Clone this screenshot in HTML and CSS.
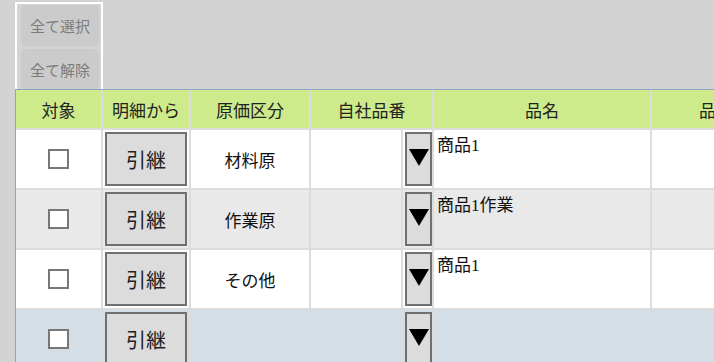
FILE: index.html
```html
<!DOCTYPE html>
<html lang="ja">
<head>
    <meta charset="UTF-8">
    <meta name="viewport" content="width=device-width, initial-scale=1.0">
    <title>原価明細</title>
    <link rel="stylesheet" href="styles.css">
</head>
<body>

    <div class="page">
        <!-- 一括選択ボタン -->
        <div class="select-panel">
            <button type="button" class="panel-btn">全て選択</button>
            <button type="button" class="panel-btn">全て解除</button>
        </div>

        <table class="detail-table">
            <colgroup>
                <col class="col-target">
                <col class="col-copy">
                <col class="col-kind">
                <col class="col-code">
                <col class="col-pick">
                <col class="col-name">
                <col class="col-more">
            </colgroup>
            <thead>
                <tr>
                    <th>対象</th>
                    <th>明細から</th>
                    <th>原価区分</th>
                    <th colspan="2">自社品番</th>
                    <th>品名</th>
                    <th>品番</th>
                </tr>
            </thead>
            <tbody>
                <tr>
                    <td class="center"><input type="checkbox" class="check"></td>
                    <td class="top"><button type="button" class="copy-btn">引継</button></td>
                    <td class="center">材料原</td>
                    <td></td>
                    <td class="top"><button type="button" class="pick-btn"><svg width="20" height="17" viewBox="0 0 20 17"><path d="M0 0H20L10 17Z" fill="#000"/></svg></button></td>
                    <td class="name">商品1</td>
                    <td></td>
                </tr>
                <tr class="alt">
                    <td class="center"><input type="checkbox" class="check"></td>
                    <td class="top"><button type="button" class="copy-btn">引継</button></td>
                    <td class="center">作業原</td>
                    <td></td>
                    <td class="top"><button type="button" class="pick-btn"><svg width="20" height="17" viewBox="0 0 20 17"><path d="M0 0H20L10 17Z" fill="#000"/></svg></button></td>
                    <td class="name">商品1作業</td>
                    <td></td>
                </tr>
                <tr>
                    <td class="center"><input type="checkbox" class="check"></td>
                    <td class="top"><button type="button" class="copy-btn">引継</button></td>
                    <td class="center">その他</td>
                    <td></td>
                    <td class="top"><button type="button" class="pick-btn"><svg width="20" height="17" viewBox="0 0 20 17"><path d="M0 0H20L10 17Z" fill="#000"/></svg></button></td>
                    <td class="name">商品1</td>
                    <td></td>
                </tr>
                <tr class="active">
                    <td class="center"><input type="checkbox" class="check"></td>
                    <td class="top"><button type="button" class="copy-btn">引継</button></td>
                    <td class="center"></td>
                    <td></td>
                    <td class="top"><button type="button" class="pick-btn"><svg width="20" height="17" viewBox="0 0 20 17"><path d="M0 0H20L10 17Z" fill="#000"/></svg></button></td>
                    <td class="name"></td>
                    <td></td>
                </tr>
            </tbody>
        </table>
    </div>

</body>
</html>
```

FILE: styles.css
```css
body {
    margin: 0;
    background-color: #d3d3d3;
    font-family: "Noto Sans CJK JP", sans-serif;
    overflow: hidden;
}

.page {
    padding-left: 15px;
    width: 900px;
}

.select-panel {
    box-sizing: border-box;
    width: 88px;
    height: 87px;
    margin-top: 2px;
    padding: 1px 2px 0 4px;
    border: 2px solid #fff;
    border-bottom: none;
    overflow: hidden;
}

.panel-btn {
    display: block;
    width: 78px;
    height: 41px;
    margin-bottom: 3px;
    padding: 0;
    border: none;
    border-radius: 4px;
    background-color: #cbcbcb;
    color: #7c7c7c;
    font-family: "Noto Sans CJK JP", sans-serif;
    font-size: 15px;
}

.detail-table {
    table-layout: fixed;
    width: 767px;
    border-collapse: separate;
    border-spacing: 0;
    border-top: 1px solid #8ea4c2;
    border-left: 1px solid #8ea4c2;
}

.col-target { width: 87px; }
.col-copy { width: 88px; }
.col-kind { width: 120px; }
.col-code { width: 92px; }
.col-pick { width: 31px; }
.col-name { width: 218px; }
.col-more { width: 130px; }

.detail-table th,
.detail-table td {
    box-sizing: border-box;
    padding: 0;
    border-right: 2px solid #dcdcdc;
    border-bottom: 2px solid #dcdcdc;
}

.detail-table th {
    height: 40px;
    background-color: #cdeb8b;
    color: #222;
    font-size: 17px;
    font-weight: normal;
    text-align: center;
}

.detail-table td {
    height: 60px;
    background-color: #fff;
    color: #111;
    font-size: 17px;
}

.detail-table tr.alt td {
    background-color: #e9e9e9;
}

.detail-table tr.active td {
    background-color: #d3dee7;
}

.center {
    text-align: center;
    vertical-align: middle;
}

.top {
    vertical-align: top;
}

.check {
    -webkit-appearance: none;
    appearance: none;
    display: block;
    box-sizing: border-box;
    width: 21px;
    height: 20px;
    margin: 0 auto;
    border: 2px solid #777;
    background-color: #fff;
}

.copy-btn {
    display: block;
    width: 82px;
    height: 54px;
    margin: 2px 0 0 2px;
    padding: 0;
    border: 2px solid #707070;
    background-color: #dcdcdc;
    color: #222;
    font-family: "Noto Sans CJK JP", sans-serif;
    font-size: 20px;
}

.pick-btn {
    display: flex;
    align-items: center;
    justify-content: center;
    width: 27px;
    height: 54px;
    margin: 2px 0 0 2px;
    padding: 0 0 3px 0;
    border: 2px solid #707070;
    background-color: #dcdcdc;
}

.name {
    vertical-align: top;
    padding: 5px 3px 0 3px !important;
    font-family: "Liberation Serif", "Noto Sans CJK JP", serif;
    font-size: 18px;
    line-height: 22px;
}
```
